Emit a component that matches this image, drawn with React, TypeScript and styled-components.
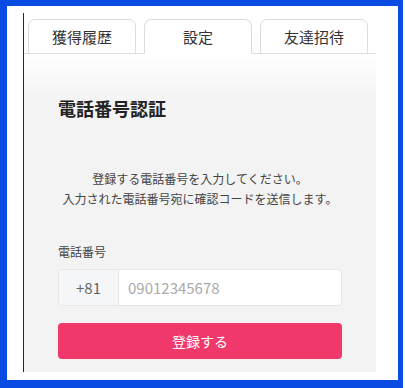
import React from "react";
import styled, { createGlobalStyle } from "styled-components";

const GlobalStyle = createGlobalStyle`
  html, body {
    margin: 0;
    padding: 0;
    background: #ffffff;
  }
  body {
    font-family: "Noto Sans CJK JP", "Noto Sans", "Liberation Sans", sans-serif;
  }
`;

const Frame = styled.div`
  box-sizing: border-box;
  width: 403px;
  height: 388px;
  border-style: solid;
  border-color: #0a4ce3;
  border-width: 6px 5px 8px 7px;
  background: #ffffff;
  padding: 7px 22px 8px 16px;
  display: flex;
`;

const Column = styled.div`
  flex: 1;
  display: flex;
  flex-direction: column;
  border-left: 1px solid #262626;
`;

const TabBar = styled.div`
  display: flex;
  gap: 8px;
  padding: 6px 0 0 4px;
  border-bottom: 1px solid #dcdcdc;
`;

const Tab = styled.div<{ $active?: boolean }>`
  box-sizing: border-box;
  width: 108px;
  height: 35px;
  margin-bottom: -1px;
  display: flex;
  align-items: center;
  justify-content: center;
  font-size: 15px;
  color: #333;
  background: #ffffff;
  border: 1px solid #dcdcdc;
  border-bottom-color: ${(p) => (p.$active ? "#ffffff" : "#dcdcdc")};
  border-radius: 7px 7px 0 0;
`;

const Panel = styled.div`
  flex: 1;
  display: flex;
  flex-direction: column;
  padding: 0 34px;
  background: linear-gradient(#ffffff 0px, #f3f3f3 48px, #f3f3f3 100%);
`;

const Heading = styled.h2`
  margin: 41px 0 0;
  font-size: 18px;
  line-height: 26px;
  font-weight: bold;
  color: #222;
`;

const Lead = styled.p`
  margin: 48px 0 0;
  font-size: 12px;
  line-height: 20px;
  text-align: center;
  color: #444;
`;

const Label = styled.div`
  margin-top: 34px;
  font-size: 12px;
  line-height: 18px;
  color: #444;
`;

const InputGroup = styled.div`
  margin-top: 8px;
  height: 37px;
  display: flex;
  box-sizing: border-box;
  border: 1px solid #e6e6e6;
  border-radius: 4px;
  overflow: hidden;
  background: #ffffff;
`;

const Prefix = styled.div`
  width: 59px;
  display: flex;
  align-items: center;
  justify-content: center;
  background: #f5f6f8;
  border-right: 1px solid #e6e6e6;
  color: #666;
  font-size: 15px;
`;

const PhoneInput = styled.input`
  flex: 1;
  border: 0;
  outline: none;
  padding: 0 9px;
  font-family: inherit;
  font-size: 15px;
  color: #333;
  background: transparent;

  &::placeholder {
    color: #aaa;
  }
`;

const Submit = styled.button`
  margin-top: 17px;
  height: 36px;
  border: 0;
  border-radius: 4px;
  background: #f0386b;
  color: #ffffff;
  font-family: inherit;
  font-size: 14px;
`;

const tabs = ["獲得履歴", "設定", "友達招待"];

export default function App() {
  return (
    <>
      <GlobalStyle />
      <Frame>
        <Column>
          <TabBar>
            {tabs.map((t) => (
              <Tab key={t} $active={t === "設定"}>
                {t}
              </Tab>
            ))}
          </TabBar>
          <Panel>
            <Heading>電話番号認証</Heading>
            <Lead>
              登録する電話番号を入力してください。
              <br />
              入力された電話番号宛に確認コードを送信します。
            </Lead>
            <Label>電話番号</Label>
            <InputGroup>
              <Prefix>+81</Prefix>
              <PhoneInput placeholder="09012345678" />
            </InputGroup>
            <Submit>登録する</Submit>
          </Panel>
        </Column>
      </Frame>
    </>
  );
}
